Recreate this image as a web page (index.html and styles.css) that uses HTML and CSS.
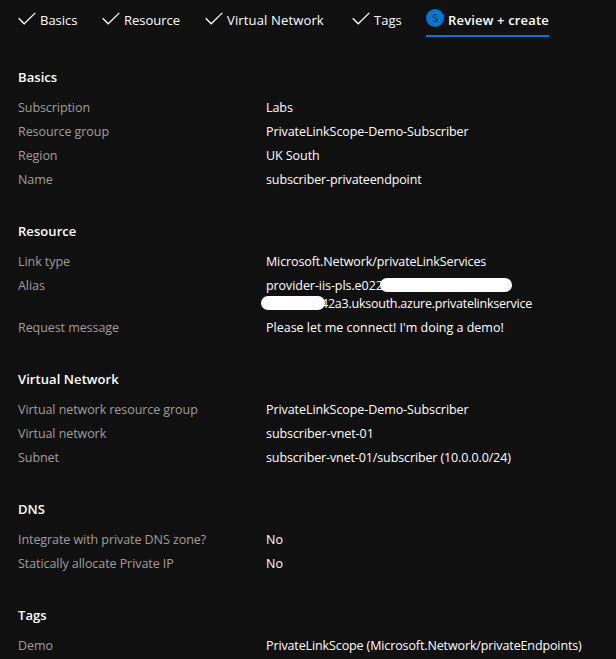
FILE: index.html
```html
<!DOCTYPE html>
<html lang="en">
<head>
<meta charset="utf-8">
<title>Create a private endpoint</title>
<link rel="stylesheet" href="styles.css">
</head>
<body>
<nav class="steps">
  <a class="step step-basics"><svg class="check" viewBox="0 0 18 14"><path d="M.7 6.3 6.2 11.8 17.3 .9"/></svg><span>Basics</span></a>
  <a class="step step-resource"><svg class="check" viewBox="0 0 18 14"><path d="M.7 6.3 6.2 11.8 17.3 .9"/></svg><span>Resource</span></a>
  <a class="step step-network"><svg class="check" viewBox="0 0 18 14"><path d="M.7 6.3 6.2 11.8 17.3 .9"/></svg><span>Virtual Network</span></a>
  <a class="step step-tags"><svg class="check" viewBox="0 0 18 14"><path d="M.7 6.3 6.2 11.8 17.3 .9"/></svg><span>Tags</span></a>
  <a class="step step-review"><span class="badge">5</span><span>Review + create</span></a>
</nav>
<main>
  <section>
    <h2>Basics</h2>
    <dl>
      <dt>Subscription</dt><dd>Labs</dd>
      <dt>Resource group</dt><dd>PrivateLinkScope-Demo-Subscriber</dd>
      <dt>Region</dt><dd>UK South</dd>
      <dt>Name</dt><dd class="snug">subscriber-privateendpoint</dd>
    </dl>
  </section>
  <section>
    <h2>Resource</h2>
    <dl>
      <dt>Link type</dt><dd class="snug">Microsoft.Network/privateLinkServices</dd>
      <dt>Alias</dt><dd>provider-iis-pls.e022<span class="redacted redacted-long"></span>-<br><span class="redacted redacted-short"></span><span class="tight">42a3.uksouth.azure.privatelinkservice</span></dd>
      <dt>Request message</dt><dd class="loose">Please let me connect! I'm doing a demo!</dd>
    </dl>
  </section>
  <section>
    <h2>Virtual Network</h2>
    <dl>
      <dt>Virtual network resource group</dt><dd>PrivateLinkScope-Demo-Subscriber</dd>
      <dt>Virtual network</dt><dd>subscriber-vnet-01</dd>
      <dt>Subnet</dt><dd class="snug">subscriber-vnet-01/subscriber (10.0.0.0/24)</dd>
    </dl>
  </section>
  <section>
    <h2>DNS</h2>
    <dl>
      <dt>Integrate with private DNS zone?</dt><dd class="loose">No</dd>
      <dt>Statically allocate Private IP</dt><dd class="loose">No</dd>
    </dl>
  </section>
  <section>
    <h2>Tags</h2>
    <dl>
      <dt>Demo</dt><dd class="snug">PrivateLinkScope (Microsoft.Network/privateEndpoints)</dd>
    </dl>
  </section>
</main>
</body>
</html>
```
FILE: styles.css
```css
* { box-sizing: border-box; }
body {
  margin: 0;
  height: 659px;
  overflow: hidden;
  background: #111;
  color: #fff;
  font: 12.5px/18px "Segoe UI", "Open Sans", "Noto Sans", sans-serif;
}
.steps {
  display: flex;
  height: 37px;
  padding: 0 18px;
  font-size: 13px;
}
.step {
  display: flex;
  align-items: flex-start;
  height: 37px;
  padding-top: 11px;
  white-space: nowrap;
}
.check {
  flex: none;
  width: 18px;
  height: 14px;
  margin: 1px 4px 0 0;
  fill: none;
  stroke: #fff;
  stroke-width: 1.3;
}
.step-basics { width: 84px; letter-spacing: 0; }
.step-resource { width: 103px; }
.step-network { width: 147px; letter-spacing: .15px; }
.step-tags { width: 74px; }
.step-review {
  width: 123px;
  font-weight: 600;
  letter-spacing: .17px;
  border-bottom: 2px solid #0078d4;
}
.badge {
  flex: none;
  width: 18px;
  height: 18px;
  margin: -2px 4px 0 0;
  border-radius: 50%;
  background: #0078d4;
  color: #111;
  font-size: 10px;
  font-weight: 400;
  letter-spacing: 0;
  text-align: center;
}
main { padding: 31px 18px 0; }
section { margin-bottom: 30px; }
h2 {
  margin: 0 0 10px;
  font-size: 13px;
  line-height: 18px;
  font-weight: 600;
  letter-spacing: .07px;
}
section { margin-bottom: 30px; }
dl {
  display: grid;
  grid-template-columns: 248px 1fr;
  margin: 0;
}
dt, dd {
  margin: 0;
  padding: 3px 0;
  letter-spacing: -.07px;
  white-space: nowrap;
}
dt { color: #a19f9d; }
.snug { letter-spacing: -.12px; }
.tight { letter-spacing: -.24px; }
.loose { letter-spacing: 0; }
.redacted {
  display: inline-block;
  position: relative;
  height: 14px;
  border-radius: 7px;
  background: #fff;
  vertical-align: -2px;
}
.redacted-long { width: 132px; margin: 0 -4px 0 -3px; }
.redacted-short { width: 64px; margin: 0 -4px 0 -5px; }
```
